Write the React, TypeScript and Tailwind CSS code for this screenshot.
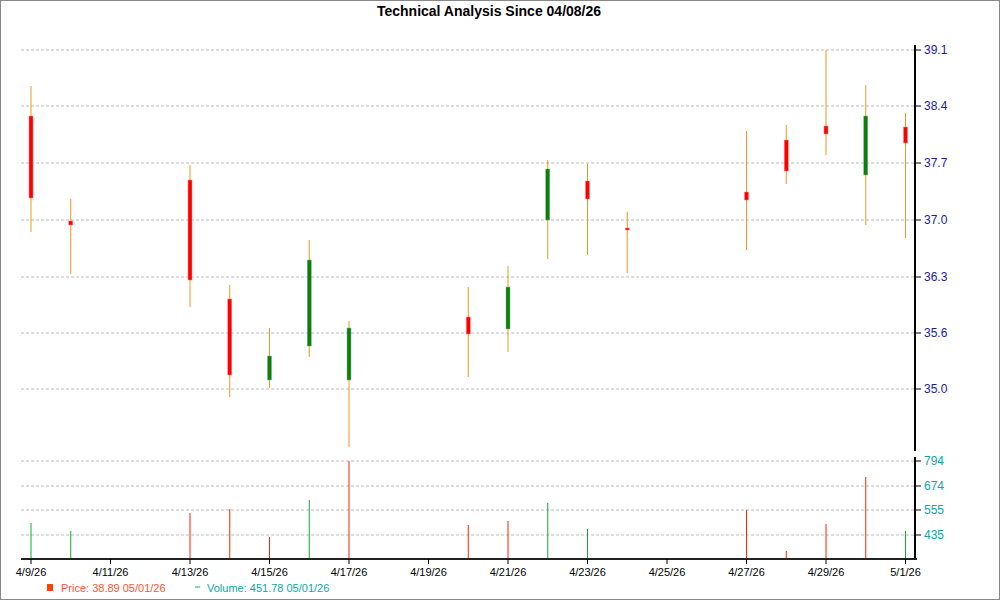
import React from "react";

const X = (d: number) => 30 + d * 39.75;
const C: [number, number, number, number, number, string][] = [
  [0, 85, 231, 115, 197, "r"], [1, 198, 273, 220, 224, "r"], [4, 164, 306, 179, 279, "r"],
  [5, 284, 396, 298, 374, "r"], [6, 327, 387, 355, 379, "g"], [7, 239, 356, 259, 345, "g"],
  [8, 320, 446, 327, 379, "g"], [11, 286, 376, 316, 333, "r"], [12, 265, 351, 286, 328, "g"],
  [13, 159, 258, 168, 219, "g"], [14, 163, 254, 180, 198, "r"], [15, 211, 272, 227, 229, "r"],
  [18, 130, 249, 191, 199, "r"], [19, 124, 183, 139, 170, "r"], [20, 49, 154, 125, 133, "r"],
  [21, 84, 224, 115, 174, "g"], [22, 112, 237, 126, 142, "r"],
];
const V: [number, number, string][] = [
  [0, 522, "g"], [1, 530, "g"], [4, 512, "r"], [5, 508, "r"], [6, 536, "r"], [7, 499, "g"],
  [8, 460, "r"], [11, 524, "r"], [12, 520, "r"], [13, 502, "g"], [14, 528, "g"], [18, 509, "r"],
  [19, 550, "r"], [20, 523, "r"], [21, 476, "r"], [22, 530, "g"],
];
const PG: [number, string][] = [[49, "39.1"], [105, "38.4"], [162, "37.7"], [219, "37.0"], [276, "36.3"], [332, "35.6"], [388, "35.0"]];
const VG: [number, string][] = [[460, "794"], [485, "674"], [509, "555"], [534, "435"]];
const XL = ["4/9/26", "4/11/26", "4/13/26", "4/15/26", "4/17/26", "4/19/26", "4/21/26", "4/23/26", "4/25/26", "4/27/26", "4/29/26", "5/1/26"];

export default function App() {
  return (
    <div className="w-[1000px] h-[600px] bg-white border border-[#888] box-border relative" style={{ fontFamily: "Arial, 'Liberation Sans', sans-serif" }}>
      <svg width="1000" height="600" className="absolute left-0 top-0" fontFamily="'Liberation Sans', Arial, sans-serif">
        <text x="488" y="15" textAnchor="middle" fontSize="14" fontWeight="bold" fill="#000">Technical Analysis Since 04/08/26</text>
        {PG.map(([y, l]) => (
          <g key={l}>
            <line x1="20" x2="914" y1={y} y2={y} stroke="#bbb" strokeDasharray="3 2" strokeWidth="1" />
            <line x1="914" x2="920" y1={y} y2={y} stroke="#000" />
            <text x="923" y={y + 4} fontSize="12" fill="#1a1aa0">{l}</text>
          </g>
        ))}
        {VG.map(([y, l]) => (
          <g key={l}>
            <line x1="20" x2="914" y1={y} y2={y} stroke="#bbb" strokeDasharray="3 2" />
            <line x1="914" x2="920" y1={y} y2={y} stroke="#000" />
            <text x="923" y={y + 4} fontSize="12" fill="#0aa8a8">{l}</text>
          </g>
        ))}
        <line x1="914" x2="914" y1="44" y2="450" stroke="#000" strokeWidth="2" />
        <line x1="914" x2="914" y1="456" y2="558" stroke="#000" strokeWidth="2" />
        {C.map(([d, h, lo, t, b, c]) => (
          <g key={d}>
            <line x1={X(d)} x2={X(d)} y1={h} y2={lo} stroke="#f0961e" strokeWidth="1" />
            <rect x={X(d) - 2} y={t} width="4" height={Math.max(b - t, 2)} fill={c === "r" ? "#ff0000" : "#0a7f0a"} stroke={c === "r" ? "#ff8080" : "#80b080"} strokeWidth="0.5" />
          </g>
        ))}
        {V.map(([d, t, c]) => (
          <line key={d} x1={X(d)} x2={X(d)} y1={t} y2="558" stroke={c === "r" ? "#ff2200" : "#11aa33"} strokeWidth="1" />
        ))}
        <line x1="20" x2="916" y1="558" y2="558" stroke="#222" strokeWidth="2" />
        {XL.map((l, i) => (
          <g key={l}>
            <line x1={X(i * 2)} x2={X(i * 2)} y1="558" y2="563" stroke="#000" />
            <text x={X(i * 2)} y="575" textAnchor="middle" fontSize="11" fill="#000">{l}</text>
          </g>
        ))}
        <rect x="46" y="583" width="6" height="7" fill="#ff4400" />
        <text x="60" y="591" fontSize="11" fill="#ff5533">Price: 38.89  05/01/26</text>
        <line x1="194" x2="199" y1="586" y2="586" stroke="#0aa8a8" />
        <text x="206" y="591" fontSize="11" fill="#0aa8a8">Volume: 451.78  05/01/26</text>
      </svg>
    </div>
  );
}
